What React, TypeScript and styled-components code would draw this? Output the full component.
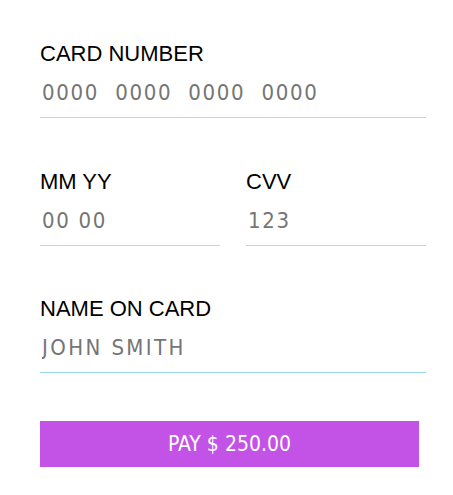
import React from 'react';
import styled, { createGlobalStyle } from 'styled-components';

const GlobalStyle = createGlobalStyle`
  html, body {
    margin: 0;
    padding: 0;
    background: #ffffff;
  }
`;

const Form = styled.form`
  box-sizing: border-box;
  width: 453px;
  padding: 41px 27px 0 40px;
  display: flex;
  flex-direction: column;
`;

const Row = styled.div<{ $gapTop?: number }>`
  display: flex;
  gap: 26px;
  margin-top: ${(p) => p.$gapTop ?? 0}px;
`;

const Field = styled.label`
  flex: 1;
  display: flex;
  flex-direction: column;
  gap: 7px;
`;

const Label = styled.span`
  font-family: 'Liberation Sans', Arial, sans-serif;
  font-size: 22px;
  line-height: 25px;
  color: #000000;
`;

const Input = styled.input<{ $accent?: boolean; $spacing?: number }>`
  box-sizing: border-box;
  width: 100%;
  height: 45px;
  margin: 0;
  padding: 6px 2px 12px;
  border: none;
  border-bottom: 1px solid ${(p) => (p.$accent ? '#9ad6ea' : '#bcd8de')};
  outline: none;
  background: transparent;
  font-family: 'DejaVu Sans Condensed', 'DejaVu Sans', sans-serif;
  font-size: 22px;
  line-height: 26px;
  letter-spacing: ${(p) => p.$spacing ?? 1.7}px;
  color: #333333;

  &::placeholder {
    color: #757575;
    opacity: 1;
  }
`;

const PayButton = styled.button`
  margin-top: 48px;
  width: 379px;
  height: 46px;
  border: none;
  border-radius: 0;
  background: #c352e6;
  color: #ffffff;
  font-family: 'DejaVu Sans Condensed', 'DejaVu Sans', sans-serif;
  font-size: 21px;
  cursor: pointer;
`;

export default function App() {
  return (
    <>
      <GlobalStyle />
      <Form onSubmit={(e) => e.preventDefault()}>
        <Row>
          <Field>
            <Label>CARD NUMBER</Label>
            <Input placeholder="0000  0000  0000  0000" />
          </Field>
        </Row>
        <Row $gapTop={51}>
          <Field>
            <Label>MM YY</Label>
            <Input placeholder="00 00" />
          </Field>
          <Field>
            <Label>CVV</Label>
            <Input placeholder="123" />
          </Field>
        </Row>
        <Row $gapTop={50}>
          <Field>
            <Label>NAME ON CARD</Label>
            <Input $accent $spacing={2.4} placeholder="JOHN SMITH" />
          </Field>
        </Row>
        <PayButton type="submit">PAY $ 250.00</PayButton>
      </Form>
    </>
  );
}
